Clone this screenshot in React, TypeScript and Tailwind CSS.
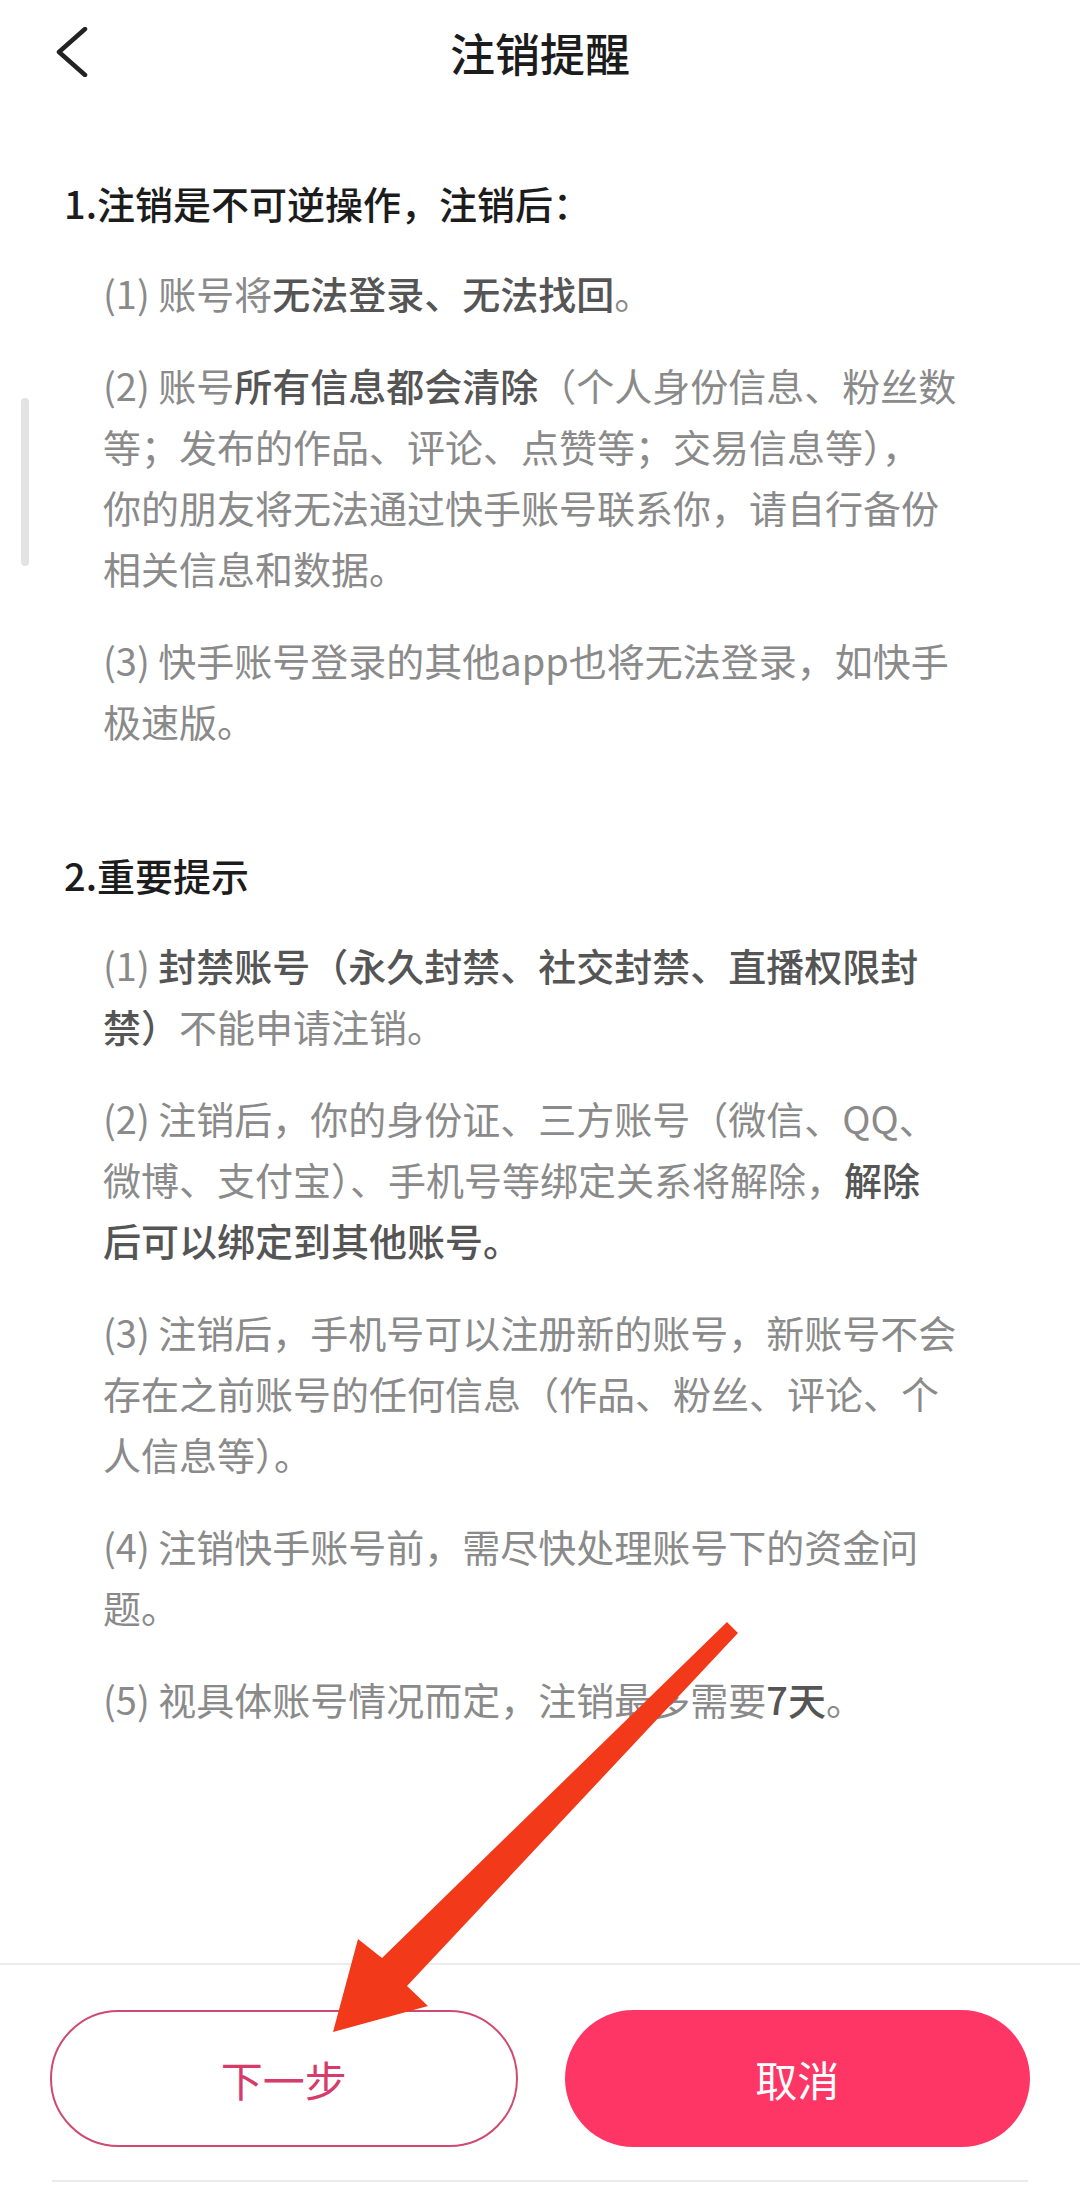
import React from 'react';

const font = { fontFamily: '"Noto Sans CJK SC", "Noto Sans", sans-serif' };

const B: React.FC<{ children: React.ReactNode }> = ({ children }) => (
  <span className="text-[#555555] font-medium">{children}</span>
);

const Item: React.FC<{ children: React.ReactNode; first?: boolean }> = ({ children, first }) => (
  <p className={`pl-[103px] text-[38px] leading-[61px] text-[#8a8a8a] whitespace-nowrap ${first ? 'mt-[29px]' : 'mt-[31px]'}`}>
    {children}
  </p>
);

export default function App() {
  return (
    <div className="relative w-[1080px] h-[2192px] bg-white flex flex-col overflow-hidden" style={font}>
      {/* 顶部导航 */}
      <div className="h-[104px] shrink-0 grid grid-cols-[1fr_auto_1fr] items-center">
        <div className="pl-[56px] flex items-center">
          <svg width="32" height="50" viewBox="0 0 32 50" fill="none">
            <polyline points="29,2 3,25 29,48" stroke="#222" strokeWidth="4.5" strokeLinecap="round" strokeLinejoin="round" />
          </svg>
        </div>
        <h1 className="text-[45px] font-medium text-[#1c1c1c] leading-none">注销提醒</h1>
        <div />
      </div>

      {/* 内容 */}
      <div className="flex-1 pt-[68px]">
        <h2 className="pl-[64px] text-[38px] leading-[61px] text-[#1c1c1c] font-medium">1.注销是不可逆操作，注销后：</h2>
        <Item first>
          (1) 账号将<B>无法登录、无法找回</B>。
        </Item>
        <Item>
          (2) 账号<B>所有信息都会清除</B>（个人身份信息、粉丝数<br />
          等；发布的作品、评论、点赞等；交易信息等），<br />
          你的朋友将无法通过快手账号联系你，请自行备份<br />
          相关信息和数据。
        </Item>
        <Item>
          (3) 快手账号登录的其他app也将无法登录，如快手<br />
          极速版。
        </Item>

        <h2 className="mt-[93px] pl-[64px] text-[38px] leading-[61px] text-[#1c1c1c] font-medium">2.重要提示</h2>
        <Item first>
          (1) <B>封禁账号（永久封禁、社交封禁、直播权限封<br />禁）</B>不能申请注销。
        </Item>
        <Item>
          (2) 注销后，你的身份证、三方账号（微信、QQ、<br />
          微博、支付宝）、手机号等绑定关系将解除，<B>解除<br />后可以绑定到其他账号。</B>
        </Item>
        <Item>
          (3) 注销后，手机号可以注册新的账号，新账号不会<br />
          存在之前账号的任何信息（作品、粉丝、评论、个<br />
          人信息等）。
        </Item>
        <Item>
          (4) 注销快手账号前，需尽快处理账号下的资金问<br />
          题。
        </Item>
        <Item>
          (5) 视具体账号情况而定，注销最多需要<B>7天</B>。
        </Item>
      </div>

      {/* 底部按钮 */}
      <div className="shrink-0 h-[229px] border-t-2 border-[#ececec] flex flex-col">
        <div className="pt-[45px] px-[50px] flex gap-[47px]">
          <button className="w-[468px] h-[137px] rounded-full border-2 border-[#cf4a70] text-[#d63b69] text-[42px] flex items-center justify-center">
            下一步
          </button>
          <button className="w-[466px] h-[137px] rounded-full bg-[#fe3666] text-white text-[42px] flex items-center justify-center">
            取消
          </button>
        </div>
        <div className="mt-[33px] mx-[52px] h-[2px] bg-[#ebebeb]" />
      </div>

      {/* 滚动条 */}
      <div className="absolute left-[21px] top-[398px] w-[8px] h-[168px] rounded-full bg-[#e3e3e3]" />

      {/* 标注箭头 */}
      <svg className="absolute inset-0 pointer-events-none" width="1080" height="2192" viewBox="0 0 1080 2192">
        <polygon
          points="333,2032 358,1939 382,1958 727,1622 738,1633 407,1986 428,2006"
          fill="#f2391a"
        />
      </svg>
    </div>
  );
}
